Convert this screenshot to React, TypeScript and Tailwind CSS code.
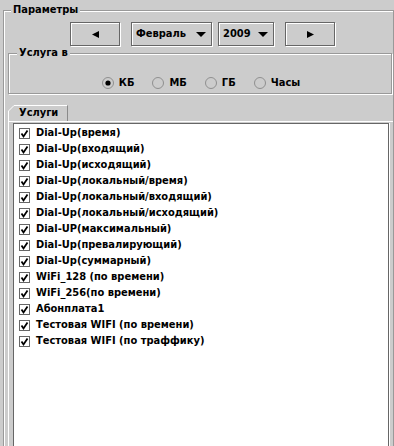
import { Fragment } from "react";

const etched = "border border-[#999999] shadow-[inset_1px_1px_0_#ffffff,1px_1px_0_#ffffff]";
const raised = "border border-[#666666] shadow-[inset_1px_1px_0_#ffffff,1px_1px_0_#ffffff]";

const services = [
    "Dial-Up(время)",
    "Dial-Up(входящий)",
    "Dial-Up(исходящий)",
    "Dial-Up(локальный/время)",
    "Dial-Up(локальный/входящий)",
    "Dial-Up(локальный/исходящий)",
    "Dial-UP(максимальный)",
    "Dial-Up(превалирующий)",
    "Dial-Up(суммарный)",
    "WiFi_128 (по времени)",
    "WiFi_256(по времени)",
    "Абонплата1",
    "Тестовая WIFI (по времени)",
    "Тестовая WIFI (по траффику)",
];

const units = ["КБ", "МБ", "ГБ", "Часы"];

const Triangle = ({ dir }: { dir: "left" | "right" | "down" }) => {
    if (dir === "down") {
        return (
            <svg width="10" height="5" viewBox="0 0 10 5">
                <path d="M0 0 L10 0 L5 5 Z" fill="#000" />
            </svg>
        );
    }
    return (
        <svg width="7" height="7" viewBox="0 0 7 7">
            <path d={dir === "left" ? "M0 3.5 L7 0 L7 7 Z" : "M7 3.5 L0 0 L0 7 Z"} fill="#000" />
        </svg>
    );
};

const Radio = ({ checked }: { checked: boolean }) => (
    <svg width="12" height="12" viewBox="0 0 12 12" className="shrink-0">
        <circle cx="6" cy="6" r="5.5" fill="none" stroke="#8f8f8f" />
        {checked ? <circle cx="6" cy="6" r="2.6" fill="#000" /> : null}
    </svg>
);

const Check = () => (
    <svg width="11" height="11" viewBox="0 0 11 11" className="shrink-0">
        <rect x="0.5" y="0.5" width="10" height="10" fill="#fff" stroke="#666666" />
        <path d="M2.5 5.5 L4.5 8.5 L8.5 2.5" fill="none" stroke="#000" strokeWidth="1.8" />
    </svg>
);

const ArrowButton = ({ dir }: { dir: "left" | "right" }) => (
    <button type="button" className={`${raised} w-[50px] h-[24px] flex items-center justify-center bg-[#cccccc]`}>
        <Triangle dir={dir} />
    </button>
);

const Combo = ({ value, width }: { value: string; width: string }) => (
    <div className={`${raised} ${width} h-[24px] flex items-center justify-between pl-[4px] pr-[5px]`}>
        <span>{value}</span>
        <Triangle dir="down" />
    </div>
);

const App = () => {
    return (
        <Fragment>
            <div className="w-[394px] h-[446px] overflow-hidden bg-[#cccccc] text-black text-[11px] font-bold font-['DejaVu_Sans_Condensed','DejaVu_Sans',sans-serif]">
                <fieldset className={`${etched} mt-[3px] ml-[3px] w-[391px] min-w-0`}>
                    <legend className="ml-[7px] px-[2px] leading-[14px] bg-[#cccccc]">Параметры</legend>

                    <div className="flex items-center pt-[5px] pl-[66px] gap-[11px]">
                        <ArrowButton dir="left" />
                        <div className="flex gap-[6px]">
                            <Combo value="Февраль" width="w-[81px]" />
                            <Combo value="2009" width="w-[56px]" />
                        </div>
                        <ArrowButton dir="right" />
                    </div>

                    <fieldset className={`${etched} ml-[4px] mr-[1px] min-w-0`}>
                        <legend className="ml-[8px] px-[2px] leading-[14px] bg-[#cccccc]">Услуга в</legend>
                        <div className="flex justify-center items-center gap-[18px] pt-[16px] pb-[3px] pl-[2px]">
                            {units.map((u, i) => (
                                <label key={u} className="flex items-center gap-[5px] leading-[14px]">
                                    <Radio checked={i === 0} />
                                    <span>{u}</span>
                                </label>
                            ))}
                        </div>
                    </fieldset>

                    <div className="mt-[11px] ml-[4px] flex">
                        <div className="relative w-[60px] h-[16px] flex items-center pl-[11px] leading-[14px]">
                            <svg width="60" height="16" viewBox="0 0 60 16" className="absolute inset-0">
                                <path d="M0.5 16 L0.5 6 L6 0.5 L59 0.5" fill="none" stroke="#fff" />
                                <path d="M59.5 0.5 L59.5 16" fill="none" stroke="#8a8a8a" />
                            </svg>
                            <span className="relative">Услуги</span>
                        </div>
                    </div>
                    <div className="ml-[4px] border-t border-l border-white pl-[4px] pt-[1px] pr-[4px] h-[340px]">
                        <div className="h-full bg-white border-t border-l border-[#666666] border-r border-r-[#666666] shadow-[1px_0_0_#ffffff] pt-[1px]">
                            {services.map((s) => (
                                <div key={s} className="flex items-center h-[16px] pl-[5px] gap-[6px] whitespace-nowrap">
                                    <Check />
                                    <span>{s}</span>
                                </div>
                            ))}
                        </div>
                    </div>
                </fieldset>
            </div>
        </Fragment>
    );
};

export default App;
